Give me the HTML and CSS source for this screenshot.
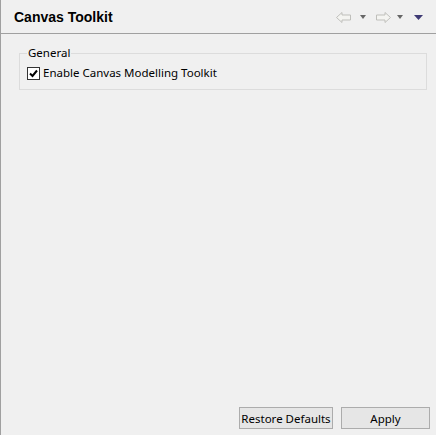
FILE: index.html
```html
<!DOCTYPE html>
<html>
<head>
<meta charset="utf-8">
<link rel="stylesheet" href="styles.css">
</head>
<body>
<div class="page">
  <div class="header">
    <div class="title">Canvas Toolkit</div>
    <div class="toolbar">
      <svg class="arrow back" width="16" height="11" viewBox="0 0 16 11"><path d="M0.5 5.5 L6 0.5 V3 H14.5 V8 H6 V10.5 Z" fill="#f4f4f1" stroke="#bfbfbb" stroke-width="1"/></svg>
      <svg class="drop d1" width="6" height="4" viewBox="0 0 6 4"><path d="M0 0 H6 L3 4 Z" fill="#666"/></svg>
      <svg class="arrow fwd" width="16" height="11" viewBox="0 0 16 11"><path d="M15.5 5.5 L10 0.5 V3 H1.5 V8 H10 V10.5 Z" fill="#f4f4f1" stroke="#bfbfbb" stroke-width="1"/></svg>
      <svg class="drop d2" width="6" height="4" viewBox="0 0 6 4"><path d="M0 0 H6 L3 4 Z" fill="#666"/></svg>
      <svg class="menu" width="9" height="5" viewBox="0 0 9 5"><path d="M0 0 H9 L4.5 5 Z" fill="#3e3a74"/></svg>
    </div>
  </div>
  <div class="content">
    <fieldset class="group">
      <legend>General</legend>
      <label class="check"><span class="box"><svg width="11" height="11" viewBox="0 0 11 11"><path d="M2 5.5 L4.5 8 L9 2.5" fill="none" stroke="#000" stroke-width="2"/></svg></span>Enable Canvas Modelling Toolkit</label>
    </fieldset>
    <div class="spacer"></div>
    <div class="buttons">
      <button class="btn restore">Restore Defaults</button>
      <button class="btn apply">Apply</button>
    </div>
  </div>
</div>
</body>
</html>
```
FILE: styles.css
```css
html, body {
  margin: 0;
  padding: 0;
  background: #f0f0f0;
}
body {
  font-family: "Noto Sans", "DejaVu Sans", sans-serif;
  font-size: 11.5px;
  color: #000;
}
.page {
  height: 435px;
  box-sizing: border-box;
  border-left: 1px solid #a0a0a0;
  display: flex;
  flex-direction: column;
}
.header {
  height: 34px;
  box-sizing: border-box;
  border-bottom: 1px solid #a0a0a0;
  display: flex;
  align-items: center;
  justify-content: space-between;
  padding: 0 13px 0 13px;
}
.title {
  font-family: "Liberation Sans", Arial, sans-serif;
  font-weight: bold;
  font-size: 14px;
  margin-top: 1px;
}
.toolbar {
  display: flex;
  align-items: center;
  margin-top: 1px;
}
.toolbar svg { display: block; }
.back { margin-right: 8px; }
.d1 { margin-right: 9px; margin-top: -1px; }
.fwd { margin-right: 6px; }
.d2 { margin-right: 11px; margin-top: -1px; }
.content {
  flex: 1;
  display: flex;
  flex-direction: column;
  padding: 12px 9px 6px 18px;
}
.group {
  margin: 0;
  border: 1px solid #dcdcdc;
  padding: 0 8px 8px 7px;
  min-width: 0;
}
.group legend {
  padding: 0 1px;
  margin-left: 0;
  line-height: 14px;
}
.check {
  display: flex;
  align-items: center;
  line-height: 16px;
  margin-top: 5px;
  white-space: nowrap;
}
.box {
  width: 11px;
  height: 11px;
  border: 1px solid #333;
  background: #fff;
  margin-right: 3px;
  display: flex;
}
.spacer { flex: 1; }
.buttons {
  display: flex;
  justify-content: flex-end;
  gap: 8px;
  margin-right: -3px;
}
.btn {
  font-family: "Noto Sans", "DejaVu Sans", sans-serif;
  font-size: 11.5px;
  height: 22px;
  border: 1px solid #acacac;
  background: #e6e6e6;
  color: #000;
  padding: 0;
  margin: 0;
  border-radius: 0;
  white-space: nowrap;
}
.restore { width: 94px; }
.apply { width: 89px; }
```
